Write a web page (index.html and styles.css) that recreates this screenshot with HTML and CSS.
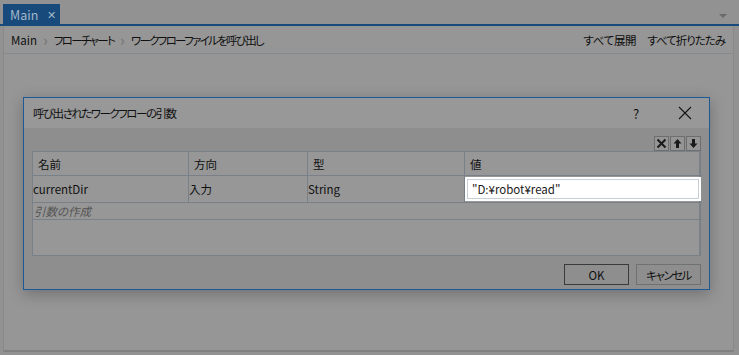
FILE: index.html
```html
<!DOCTYPE html>
<html lang="ja">
<head>
<meta charset="utf-8">
<link rel="stylesheet" href="styles.css">
</head>
<body>
<div class="app">
  <div class="tabstrip">
    <div class="tab"><span class="tab-label">Main</span><span class="tab-close">✕</span></div>
    <div class="tab-menu"></div>
  </div>
  <div class="panel">
    <div class="crumbs">
      <div class="crumb-path">
        <span>Main</span><span class="sep">›</span><span class="jpc">フローチャート</span><span class="sep">›</span><span class="jpc">ワークフローファイルを呼び出し</span>
      </div>
      <div class="crumb-actions"><span class="jps">すべて展開</span><span class="jpk">すべて折りたたみ</span></div>
    </div>
    <div class="canvas"></div>

    <div class="dialog">
      <div class="dlg-title">
        <span class="dlg-caption jp">呼び出されたワークフローの引数</span>
        <span class="dlg-help">?</span>
        <svg class="dlg-x" width="14" height="14" viewBox="0 0 14 14"><path d="M1 1L13 13M13 1L1 13" stroke="#141414" stroke-width="1.1" fill="none"/></svg>
      </div>
      <div class="dlg-body">
        <div class="toolbar">
          <div class="tb-btn"><svg width="11" height="11" viewBox="0 0 11 11"><path d="M1.5 1.5L9.5 9.5M9.5 1.5L1.5 9.5" stroke="#1a1a1a" stroke-width="2" fill="none"/></svg></div>
          <div class="tb-btn"><svg width="9" height="11" viewBox="0 0 9 11"><path d="M4.5 1L8.5 5.5H6V10H3V5.5H0.5Z" fill="#1a1a1a"/></svg></div>
          <div class="tb-btn"><svg width="9" height="11" viewBox="0 0 9 11"><path d="M4.5 10L8.5 5.5H6V1H3V5.5H0.5Z" fill="#1a1a1a"/></svg></div>
        </div>
        <div class="grid">
          <div class="hd">名前</div>
          <div class="hd">方向</div>
          <div class="hd">型</div>
          <div class="hd">値</div>
          <div class="cell">currentDir</div>
          <div class="cell">入力</div>
          <div class="cell">String</div>
          <div class="cell value"><div class="input">"D:¥robot¥read"</div></div>
          <div class="create">引数の作成</div>
          <div class="empty"></div>
        </div>
        <div class="actions">
          <button class="btn ok">OK</button>
          <button class="btn"><span class="jp">キャンセル</span></button>
        </div>
      </div>
    </div>
  </div>
</div>
</body>
</html>
```

FILE: styles.css
```css
* { box-sizing: border-box; }
html, body { margin: 0; padding: 0; }
body {
  width: 739px;
  height: 355px;
  overflow: hidden;
  background: #929292;
  font-family: "Noto Sans CJK JP", sans-serif;
  font-feature-settings: "palt";
  font-size: 11.5px;
  color: #101010;
}
.jp { letter-spacing: -1.5px; }
.jpc { letter-spacing: -1.7px; }
.jpk { letter-spacing: -1px; }
.jps { letter-spacing: -0.3px; }
.app { position: relative; width: 739px; height: 355px; }
.tabstrip {
  height: 26px;
  padding: 4px 0 0 3px;
  display: flex;
  align-items: flex-start;
  border-bottom: 2px solid #184b7c;
  position: relative;
}
.tab {
  width: 57px;
  height: 20px;
  background: #184b7c;
  color: #a3b7ca;
  display: flex;
  align-items: center;
  padding-left: 7px;
  gap: 9px;
  font-size: 12.5px;
}
.tab-close { font-size: 11px; color: #a3b7ca; }
.tab-menu {
  position: absolute;
  right: 12px;
  top: 14px;
  width: 0; height: 0;
  border-left: 4px solid transparent;
  border-right: 4px solid transparent;
  border-top: 4px solid #6a6a6a;
}
.panel {
  position: relative;
  margin: 0 5px 0 3px;
  height: 326px;
  border-left: 1px solid #8a8a8a;
  border-right: 1px solid #8a8a8a;
  border-bottom: 2px solid #808080;
  background: #969696;
}
.crumbs {
  height: 28px;
  border-bottom: 1px solid #858a90;
  display: flex;
  align-items: center;
  justify-content: space-between;
  padding: 0 8px 0 7px;
}
.crumb-path { display: flex; align-items: center; gap: 6px; }
.sep { color: #7a7a7a; font-size: 15px; line-height: 12px; font-weight: bold; }
.crumb-actions { display: flex; gap: 11px; }
.dialog {
  position: absolute;
  left: 19px;
  top: 71px;
  width: 687px;
  height: 193px;
  border: 1px solid #1d5a94;
  background: #8e8e8e;
  box-shadow: 0 4px 14px rgba(0,0,0,0.25);
  display: flex;
  flex-direction: column;
}
.dlg-title {
  height: 30px;
  background: #989898;
  display: flex;
  align-items: center;
  padding: 0 0 0 9px;
}
.dlg-caption { flex: 1; }
.dlg-help { width: 14px; margin-right: 31px; font-size: 13px; }
.dlg-x { margin-right: 17px; }
.dlg-body { flex: 1; padding: 8px 8px 0 8px; display: flex; flex-direction: column; }
.toolbar { display: flex; justify-content: flex-end; height: 15px; gap: 1px; }
.tb-btn {
  width: 15px; height: 15px;
  border: 1px solid #6e6e6e;
  background: #959595;
  display: flex; align-items: center; justify-content: center;
}
.grid {
  display: grid;
  grid-template-columns: 156px 119px 157px 237px;
  grid-template-rows: 24px 27px 17px 35px;
  border: 1px solid #7a8088;
  border-right: 2px solid #7a8088;
  background: #979797;
}
.hd {
  border-right: 1px solid #7a8088;
  border-bottom: 1px solid #7a8088;
  padding: 4px 0 0 5px;
}
.cell {
  border-right: 1px solid #7a8088;
  border-bottom: 1px solid #7a8088;
  padding-left: 0;
  display: flex;
  align-items: center;
}
.hd:nth-child(4), .cell.value { border-right: none; }
.value { padding: 1px 1px 1px 0; }
.input {
  width: 100%;
  height: 100%;
  background: #ffffff;
  border: 2px solid #ffffff;
  outline: 1px solid #c8cfd8;
  outline-offset: -3px;
  padding-left: 5px;
  display: flex;
  align-items: center;
  color: #1a1a1a;
}
.create {
  grid-column: 1 / -1;
  border-bottom: 1px solid #7a8088;
  font-style: italic;
  color: #545454;
  padding-left: 1px;
  line-height: 16px;
}
.empty { grid-column: 1 / -1; }
.actions { display: flex; justify-content: flex-end; gap: 7px; margin-top: 8px; }
.btn {
  width: 65px;
  height: 21px;
  font: inherit;
  color: #101010;
  background: #8e8e8e;
  border: 1px solid #717171;
  padding: 0;
}
.btn.ok { border-color: #3a3a3a; }
```
